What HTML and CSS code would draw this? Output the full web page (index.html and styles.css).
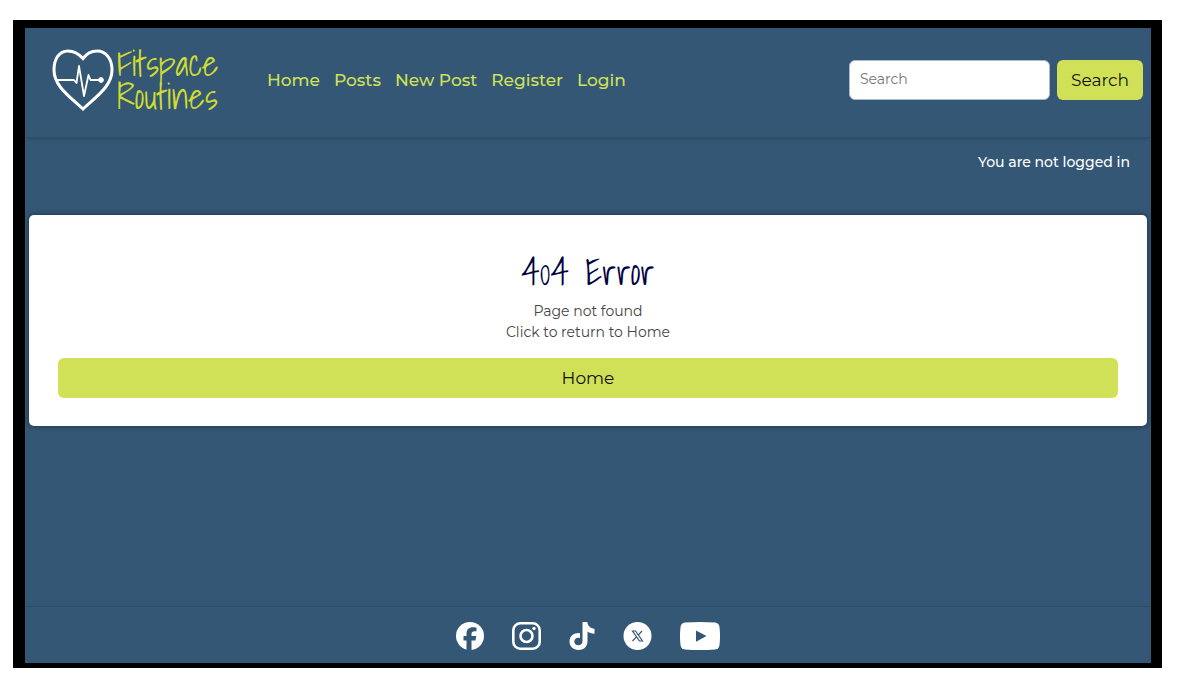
FILE: index.html
```html
<!DOCTYPE html>
<html lang="en">
<head>
<meta charset="utf-8">
<meta name="viewport" content="width=device-width, initial-scale=1">
<title>Fitspace Routines</title>
<link rel="stylesheet" href="styles.css">
</head>
<body>
<div class="frame">
  <header class="header">
    <a class="brand" href="#">
      <svg class="brand-heart" viewBox="0 0 62 62" fill="none" stroke="#fff" aria-hidden="true">
        <path d="M31 9.500C26 4 21 2 16 2C7 2 2 10 2 21C2 37 17 47 31 60C45 47 60 37 60 21C60 10 54 2 45 2C40 2 35 4 31 9.500Z" stroke-width="3"/>
        <path d="M5 31H22L24.500 34L27 17L32 47L36.500 26L38.500 31H49" stroke-width="1.800" stroke-linejoin="round"/>
        <circle cx="49" cy="31" r="2.400" fill="#fff"/>
      </svg>
      <span class="brand-name">Fitspace<br>Routines</span>
    </a>
    <nav class="nav">
      <a href="#">Home</a>
      <a href="#">Posts</a>
      <a href="#">New Post</a>
      <a href="#">Register</a>
      <a href="#">Login</a>
    </nav>
    <form class="search">
      <input class="search-box" type="search" placeholder="Search" aria-label="Search">
      <button class="button" type="submit">Search</button>
    </form>
  </header>
  <p class="status">You are not logged in</p>
  <main class="card">
    <h1 class="title">404 Error</h1>
    <p class="message">Page not found<br>Click to return to Home</p>
    <a class="button" href="#">Home</a>
  </main>
  <footer class="footer">
    <a href="#" aria-label="Facebook"><svg width="28" height="28" viewBox="0 0 28 28"><circle cx="14" cy="14" r="14" fill="#fff"/><path d="M10.500 28V18.500H7.500V14H10.500V11.500C10.500 7.500 13 5.300 17 5.300C19 5.300 20.500 5.600 20.500 5.600V9.300H18.500C16.500 9.300 15.500 10.200 15.500 11.900V14H20.300L19.500 18.500H15.500V28Z" fill="#345775"/></svg></a>
    <a href="#" aria-label="Instagram"><svg width="29" height="28" viewBox="0 0 29 28" fill="none" stroke="#fff" stroke-width="2.600"><rect x="1.300" y="1.300" width="26.400" height="25.400" rx="7"/><circle cx="14.500" cy="14" r="6"/><circle cx="22" cy="6.500" r="1.700" fill="#fff" stroke="none"/></svg></a>
    <a href="#" aria-label="TikTok"><svg width="26" height="28" viewBox="0 0 26 28"><path d="M13.500 0H18.300C18.600 3.700 21.300 6.300 25.500 6.800V11.700C22.800 11.700 20.400 10.900 18.500 9.500V19C18.500 25 14.500 28 9.500 28C4 28 .5 24 .5 19.500C.5 14 5 10.500 11 11V16C8 15.200 5.300 16.700 5.300 19.500C5.300 21.700 7 23.300 9.300 23.300C12 23.300 13.500 21.500 13.500 18.700Z" fill="#fff"/></svg></a>
    <a href="#" aria-label="X"><svg width="29" height="28" viewBox="0 0 29 28"><circle cx="14.500" cy="14" r="14" fill="#fff"/><path d="M9.500 9H12.500L19.500 19H16.500ZM19 9L15 13.300M13.600 14.800L9.500 19" fill="none" stroke="#345775" stroke-width="1.200"/></svg></a>
    <a href="#" aria-label="YouTube"><svg width="40" height="28" viewBox="0 0 40 28"><path d="M5 .5Q20-.5 35 .5Q39 1 39.500 5Q40.500 14 39.500 23Q39 27 35 27.500Q20 28.500 5 27.500Q1 27 .5 23Q-.5 14 .5 5Q1 1 5 .5Z" fill="#fff"/><path d="M16 8.500L26.500 14L16 19.800Z" fill="#345775"/></svg></a>
  </footer>
</div>
</body>
</html>
```
FILE: styles.css
```css
* {
  box-sizing: border-box;
}

body {
  margin: 0;
  min-height: 100vh;
  padding: 20px 21px 23px 13px;
  display: flex;
  background: #fff;
  color: #444;
  font-family: Montserrat, Inter, sans-serif;
  font-size: 14px;
  line-height: 21px;
}

a {
  color: inherit;
  text-decoration: none;
}

.frame {
  flex: 1;
  display: flex;
  flex-direction: column;
  border: solid #000;
  border-width: 8px 11px 5px 12px;
  background: #345775;
}

.header {
  display: flex;
  align-items: center;
  padding: 19px 8px 24px 27px;
  border-bottom: 1px solid #2d4c66;
  box-shadow: 0 1px 3px rgba(0, 0, 0, 0.15);
}

.brand {
  display: flex;
  align-items: center;
  gap: 3px;
  width: 215px;
  color: #d0dc32;
}

.brand-heart {
  width: 62px;
  height: 62px;
}

.brand-name,
.title {
  font-family: "Shadows Into Light", "Liberation Sans Narrow", "DejaVu Sans Condensed", cursive;
  font-weight: 400;
}

.brand-name {
  font-size: 35px;
  line-height: 33px;
}

.nav {
  display: flex;
  gap: 14px;
  color: #d0e057;
  font-size: 17px;
  font-weight: 500;
  white-space: nowrap;
}

.search {
  display: flex;
  gap: 7px;
  margin-left: auto;
}

.search-box {
  width: 201px;
  padding: 0 10px 2px;
  border: 1px solid #a9b9cd;
  border-radius: 6px;
  background: #fff;
  font: inherit;
}

.search-box::placeholder {
  color: #757575;
}

.button {
  display: block;
  padding: 10px 14px;
  border: 0;
  border-radius: 6px;
  background: #d0e157;
  color: #111;
  font-family: inherit;
  font-size: 17px;
  line-height: 20px;
  text-align: center;
}

.status {
  margin: 14px 21px 0;
  color: #fff;
  font-weight: 500;
  text-align: right;
}

.card {
  margin: 42px 4px 0 4px;
  padding: 36px 29px 28px;
  border-radius: 5px;
  background: #fff;
  box-shadow: 0 0 5px 1px rgba(0, 0, 0, 0.35);
  text-align: center;
}

.title {
  margin: 0 0 8px;
  color: #00003f;
  font-size: 36px;
  line-height: 42px;
}

.message {
  margin: 0 0 15px;
}

.footer {
  display: flex;
  justify-content: center;
  gap: 28px;
  margin-top: auto;
  padding: 15px 0 13px;
  border-top: 1px solid #2d4c66;
}

.footer svg {
  display: block;
}
```
